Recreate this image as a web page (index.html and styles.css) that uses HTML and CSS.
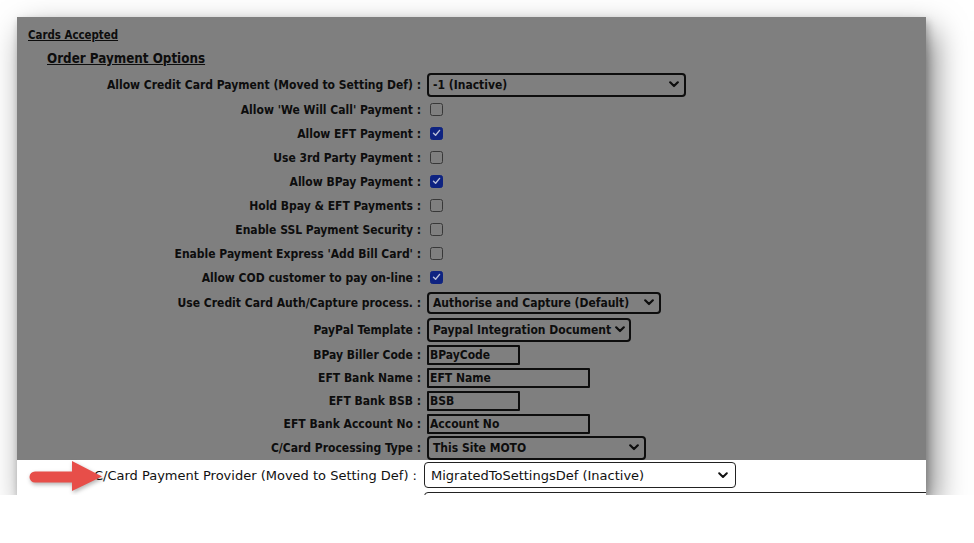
FILE: index.html
```html
<!DOCTYPE html>
<html lang="en">
<head>
    <meta charset="UTF-8">
    <title>Order Payment Options</title>
    <link rel="stylesheet" href="styles.css">
</head>
<body>
    <div class="page">
        <div class="shot">
            <div class="dim">
                <div class="section-title">Cards Accepted</div>
                <div class="group-title">Order Payment Options</div>

                <div class="form">
                    <div class="row h25">
                        <label>Allow Credit Card Payment (Moved to Setting Def) :</label>
                        <div class="select w259 tall">
                            <span>-1 (Inactive)</span>
                            <svg class="chev" width="10" height="7" viewBox="0 0 10 7"><path d="M1.2 1.3 L5 5 L8.8 1.3" fill="none" stroke="#0d0d0d" stroke-width="2.2" stroke-linecap="round" stroke-linejoin="round"/></svg>
                        </div>
                    </div>
                    <div class="row h24 check-row">
                        <label>Allow 'We Will Call' Payment :</label>
                        <span class="cb"></span>
                    </div>
                    <div class="row h24 check-row">
                        <label>Allow EFT Payment :</label>
                        <span class="cb checked"><svg width="9" height="8" viewBox="0 0 9 8"><path d="M1.5 4.2 L3.6 6.2 L7.6 1.4" fill="none" stroke="#b9bfd9" stroke-width="1.4" stroke-linecap="round" stroke-linejoin="round"/></svg></span>
                    </div>
                    <div class="row h24 check-row">
                        <label>Use 3rd Party Payment :</label>
                        <span class="cb"></span>
                    </div>
                    <div class="row h24 check-row">
                        <label>Allow BPay Payment :</label>
                        <span class="cb checked"><svg width="9" height="8" viewBox="0 0 9 8"><path d="M1.5 4.2 L3.6 6.2 L7.6 1.4" fill="none" stroke="#b9bfd9" stroke-width="1.4" stroke-linecap="round" stroke-linejoin="round"/></svg></span>
                    </div>
                    <div class="row h24 check-row">
                        <label>Hold Bpay &amp; EFT Payments :</label>
                        <span class="cb"></span>
                    </div>
                    <div class="row h24 check-row">
                        <label>Enable SSL Payment Security :</label>
                        <span class="cb"></span>
                    </div>
                    <div class="row h24 check-row">
                        <label>Enable Payment Express 'Add Bill Card' :</label>
                        <span class="cb"></span>
                    </div>
                    <div class="row h24 check-row">
                        <label>Allow COD customer to pay on-line :</label>
                        <span class="cb checked"><svg width="9" height="8" viewBox="0 0 9 8"><path d="M1.5 4.2 L3.6 6.2 L7.6 1.4" fill="none" stroke="#b9bfd9" stroke-width="1.4" stroke-linecap="round" stroke-linejoin="round"/></svg></span>
                    </div>
                    <div class="row h27">
                        <label>Use Credit Card Auth/Capture process. :</label>
                        <div class="select w234">
                            <span>Authorise and Capture (Default)</span>
                            <svg class="chev" width="10" height="7" viewBox="0 0 10 7"><path d="M1.2 1.3 L5 5 L8.8 1.3" fill="none" stroke="#0d0d0d" stroke-width="2.2" stroke-linecap="round" stroke-linejoin="round"/></svg>
                        </div>
                    </div>
                    <div class="row h27">
                        <label>PayPal Template :</label>
                        <div class="select w204 tall">
                            <span>Paypal Integration Document</span>
                            <svg class="chev" width="10" height="7" viewBox="0 0 10 7"><path d="M1.2 1.3 L5 5 L8.8 1.3" fill="none" stroke="#0d0d0d" stroke-width="2.2" stroke-linecap="round" stroke-linejoin="round"/></svg>
                        </div>
                    </div>
                    <div class="row h23">
                        <label>BPay Biller Code :</label>
                        <div class="textbox w93">BPayCode</div>
                    </div>
                    <div class="row h23">
                        <label>EFT Bank Name :</label>
                        <div class="textbox w163">EFT Name</div>
                    </div>
                    <div class="row h23">
                        <label>EFT Bank BSB :</label>
                        <div class="textbox w93">BSB</div>
                    </div>
                    <div class="row h23">
                        <label>EFT Bank Account No :</label>
                        <div class="textbox w163">Account No</div>
                    </div>
                    <div class="row h25">
                        <label>C/Card Processing Type :</label>
                        <div class="select w219 tall">
                            <span>This Site MOTO</span>
                            <svg class="chev" width="10" height="7" viewBox="0 0 10 7"><path d="M1.2 1.3 L5 5 L8.8 1.3" fill="none" stroke="#0d0d0d" stroke-width="2.2" stroke-linecap="round" stroke-linejoin="round"/></svg>
                        </div>
                    </div>
                </div>
            </div>

            <div class="focus">
                <div class="row focus-row">
                    <label>C/Card Payment Provider (Moved to Setting Def) :</label>
                    <div class="select light w312">
                        <span>MigratedToSettingsDef (Inactive)</span>
                        <svg class="chev" width="10" height="7" viewBox="0 0 10 7"><path d="M1.2 1.3 L5 5 L8.8 1.3" fill="none" stroke="#111" stroke-width="2" stroke-linecap="round" stroke-linejoin="round"/></svg>
                    </div>
                </div>
                <div class="row focus-row">
                    <label></label>
                    <div class="select light next"></div>
                </div>

                <!-- callout arrow -->
                <svg class="arrow" width="78" height="32" viewBox="0 0 78 32">
                    <path d="M6 10.5 H47 V21.5 H6 A5.5 5.5 0 0 1 6 10.5 Z" fill="#e74e49"/>
                    <path d="M43 0 L73 15.5 L43 30 Z" fill="#e74e49"/>
                </svg>
            </div>
        </div>
    </div>
</body>
</html>
```

FILE: styles.css
```css
body {
    margin: 0;
    background: #fff;
    font-family: "DejaVu Sans Condensed", "DejaVu Sans", sans-serif;
    color: #0d0d0d;
}
.page {
    padding: 17px 0 0 17px;
}
.shot {
    position: relative;
    width: 909px;
    height: 478px;
    overflow: hidden;
    background: #fff;
    box-shadow: 2px 4px 8px rgba(0,0,0,0.25), 8px 14px 30px rgba(0,0,0,0.5);
}
.dim {
    background: #7f7f7f;
    height: 443px;
    padding-top: 8px;
    box-sizing: border-box;
}
.section-title {
    margin-left: 11px;
    line-height: 20px;
    font-size: 11.4px;
    font-weight: bold;
    text-decoration: underline;
}
.group-title {
    margin: 2px 0 1px 30px;
    line-height: 24px;
    font-size: 13.3px;
    font-weight: bold;
    text-decoration: underline;
}
.row {
    display: grid;
    grid-template-columns: 404px 1fr;
    column-gap: 6px;
    align-items: center;
}
.row label {
    text-align: right;
    white-space: nowrap;
    font-size: 12px;
    font-weight: bold;
}
.check-row label {
    padding-top: 2px;
}
.h23 { height: 23px; }
.h24 { height: 24px; }
.h25 { height: 25px; }
.h27 { height: 27px; }

.cb {
    display: flex;
    align-items: center;
    justify-content: center;
    width: 13px;
    height: 13px;
    margin: 0 0 0 3px;
    box-sizing: border-box;
    border: 1.5px solid #383838;
    border-radius: 2.5px;
}
.cb.checked {
    background: #0e2381;
    border-color: #0e2381;
}
.select {
    display: flex;
    align-items: center;
    justify-content: space-between;
    height: 22px;
    box-sizing: border-box;
    padding: 0 5px 0 4px;
    border: 2px solid #0d0d0d;
    border-radius: 4px;
    font-size: 12px;
    font-weight: bold;
    white-space: nowrap;
    overflow: hidden;
}
.select.tall { height: 24px; }
.chev { flex: none; margin-left: 4px; }
.textbox {
    height: 20px;
    line-height: 16px;
    box-sizing: border-box;
    padding-left: 1px;
    border: 2px solid #0d0d0d;
    border-radius: 1px;
    font-size: 12px;
    font-weight: bold;
}
.w93 { width: 93px; }
.w163 { width: 163px; }
.w204 { width: 204px; }
.w219 { width: 219px; }
.w234 { width: 234px; }
.w259 { width: 259px; }
.w312 { width: 312px; }

.focus {
    position: relative;
    height: 35px;
    padding-top: 2px;
    box-sizing: border-box;
    background: #fff;
}
.focus-row {
    grid-template-columns: 400px 1fr;
    column-gap: 7px;
    color: #111;
    font-family: "DejaVu Sans", sans-serif;
}
.focus-row label {
    font-size: 13px;
    font-weight: normal;
}
.select.light {
    height: 26px;
    border: 1.5px solid #222;
    padding: 0 7px 0 6px;
    font-size: 13px;
    font-weight: normal;
    background: #fff;
}
.select.next {
    width: 560px;
    margin-top: 4px;
}
.arrow {
    position: absolute;
    left: 12px;
    top: 1px;
    filter: drop-shadow(1px 2px 2px rgba(0,0,0,0.3));
}
```
